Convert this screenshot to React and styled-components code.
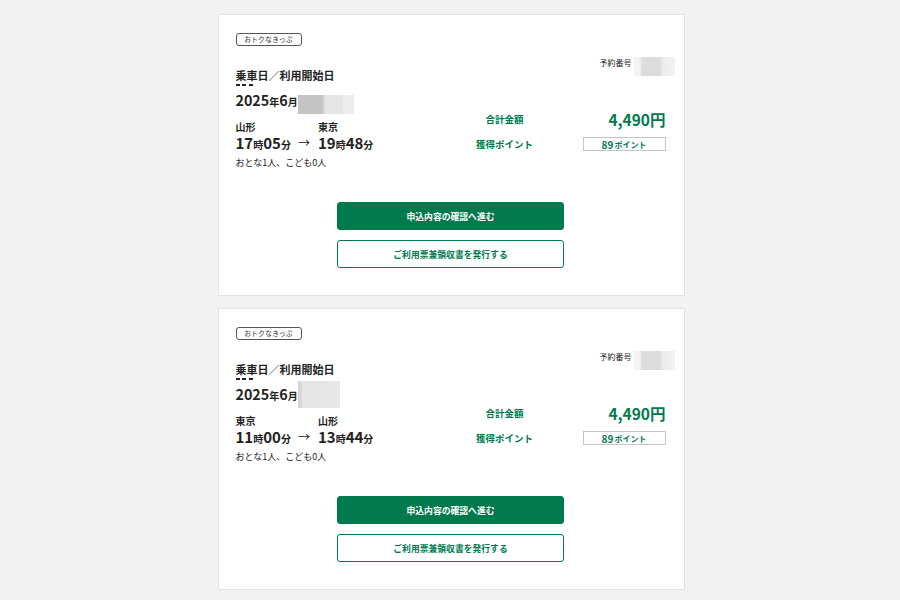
import React from 'react';
import styled, { createGlobalStyle } from 'styled-components';

const GREEN = '#007a4d';

const GlobalStyle = createGlobalStyle`
  body {
    margin: 0;
    background: #f2f2f2;
    font-family: "Noto Sans CJK JP", "Noto Sans", sans-serif;
    color: #222;
  }
`;

const trips = [
  {
    from: '山形', to: '東京',
    dep: ['17', '05'], arr: ['19', '48'],
    blur: { h: 19, kind: 'split' },
  },
  {
    from: '東京', to: '山形',
    dep: ['11', '00'], arr: ['13', '44'],
    blur: { h: 27, kind: 'plain' },
  },
];

function Trip({ trip }) {
  return (
    <Card>
      <Top>
        <LeftCol>
          <Tag>おトクなきっぷ</Tag>
          <Title>乗車日／利用開始日</Title>
          <Dashes />
          <DateRow>
            <DateText>
              2025<Small>年</Small>6<Small>月</Small>
            </DateText>
            <Blur $w={trip.blur.kind === 'split' ? 56 : 42} $h={trip.blur.h} $kind={trip.blur.kind} />
          </DateRow>
          <Route>
            <Station>{trip.from}</Station>
            <span />
            <Station>{trip.to}</Station>
            <Time>{trip.dep[0]}<Unit>時</Unit>{trip.dep[1]}<Unit>分</Unit></Time>
            <Arrow>→</Arrow>
            <Time>{trip.arr[0]}<Unit>時</Unit>{trip.arr[1]}<Unit>分</Unit></Time>
          </Route>
          <Pax>おとな1人、こども0人</Pax>
        </LeftCol>
        <RightCol>
          <Reserve>
            <ReserveLabel>予約番号</ReserveLabel>
            <Blur $w={41} $h={19} $kind="center" />
          </Reserve>
          <PriceGrid>
            <PriceLabel>合計金額</PriceLabel>
            <Price>4,490円</Price>
            <PriceLabel>獲得ポイント</PriceLabel>
            <PointBox>89<PointUnit>ポイント</PointUnit></PointBox>
          </PriceGrid>
        </RightCol>
      </Top>
      <Buttons>
        <Button $primary>申込内容の確認へ進む</Button>
        <Button>ご利用票兼領収書を発行する</Button>
      </Buttons>
    </Card>
  );
}

export default function App() {
  return (
    <>
      <GlobalStyle />
      <Page>
        {trips.map((t, i) => <Trip key={i} trip={t} />)}
      </Page>
    </>
  );
}

const Page = styled.div`
  display: flex;
  flex-direction: column;
  align-items: center;
  gap: 12px;
  padding: 14px 0 12px 2px;
`;

const Card = styled.div`
  width: 430px;
  background: #fff;
  border: 1px solid #e3e3e3;
  padding: 18px 18px 27px 17px;
`;

const Top = styled.div`
  display: flex;
  align-items: flex-start;
`;

const LeftCol = styled.div`
  width: 210px;
  display: flex;
  flex-direction: column;
  align-items: flex-start;
`;

const Tag = styled.div`
  width: 64px;
  height: 11px;
  border: 1px solid #555;
  border-radius: 3px;
  font-size: 7px;
  line-height: 11px;
  text-align: center;
  color: #333;
`;

const Title = styled.div`
  margin-top: 22px;
  font-size: 11px;
  line-height: 14px;
  font-weight: 700;
`;

const Dashes = styled.div`
  margin-top: 2px;
  width: 17px;
  height: 2px;
  background: repeating-linear-gradient(90deg, #222 0 4px, transparent 4px 6.5px);
`;

const DateRow = styled.div`
  margin-top: 4px;
  height: 24px;
  display: flex;
  align-items: flex-end;
`;

const DateText = styled.div`
  font-size: 14.3px;
  line-height: 20px;
  font-weight: 700;
  padding-bottom: 4px;
`;

const Small = styled.span`
  font-size: 10px;
  line-height: 10px;
`;

const Blur = styled.div`
  flex: none;
  width: ${(p) => p.$w}px;
  height: ${(p) => p.$h}px;
  background: ${(p) =>
    p.$kind === 'split'
      ? 'linear-gradient(90deg, #c4c4c4 0 25px, #d9d9d9 25px 27px, #e5e5e5 27px 45px, #ececec 45px)'
      : p.$kind === 'center'
      ? 'linear-gradient(90deg, #f3f3f3 0 6px, #dcdcdc 8px 26px, #ebebeb 28px, #f3f3f3)'
      : 'linear-gradient(90deg, #d6d6d6 0 3px, #e4e4e4 4px, #e8e8e8)'};
`;

const Route = styled.div`
  margin-top: 5px;
  display: grid;
  grid-template-columns: auto auto auto;
  grid-template-rows: 15px 18px;
  column-gap: 7px;
  align-items: center;
`;

const Station = styled.div`
  font-size: 10px;
  line-height: 14px;
  font-weight: 700;
`;

const Time = styled.div`
  font-size: 15px;
  line-height: 18px;
  font-weight: 700;
`;

const Unit = styled.span`
  font-size: 10px;
  line-height: 10px;
`;

const Arrow = styled.div`
  font-size: 12px;
  line-height: 18px;
  padding-right: 1px;
`;

const Pax = styled.div`
  margin-top: 4px;
  font-size: 9px;
  line-height: 13px;
`;

const RightCol = styled.div`
  flex: 1;
  padding-top: 24px;
  display: flex;
  flex-direction: column;
`;

const Reserve = styled.div`
  display: flex;
  justify-content: flex-end;
  align-items: flex-start;
  gap: 2px;
  margin-right: -9px;
`;

const ReserveLabel = styled.div`
  font-size: 8px;
  line-height: 10px;
  margin-top: 1px;
`;

const PriceGrid = styled.div`
  margin-top: 32px;
  display: grid;
  grid-template-columns: 1fr 83px;
  grid-template-rows: 22px 14px;
  column-gap: 19px;
  row-gap: 7px;
  align-items: center;
`;

const PriceLabel = styled.div`
  text-align: center;
  font-size: 9.5px;
  font-weight: 700;
  color: ${GREEN};
`;

const Price = styled.div`
  text-align: right;
  font-size: 15.5px;
  line-height: 22px;
  font-weight: 700;
  color: ${GREEN};
`;

const PointBox = styled.div`
  height: 12px;
  border: 1px solid #c4c4c4;
  display: flex;
  justify-content: center;
  align-items: center;
  font-size: 10px;
  font-weight: 700;
  color: ${GREEN};
`;

const PointUnit = styled.span`
  font-size: 8px;
  margin-left: 1px;
`;

const Buttons = styled.div`
  margin-top: 33px;
  display: flex;
  flex-direction: column;
  align-items: center;
  gap: 10px;
`;

const Button = styled.button`
  width: 227px;
  height: 28px;
  border-radius: 3px;
  border: ${(p) => (p.$primary ? `1px solid ${GREEN}` : `1.5px solid ${GREEN}`)};
  background: ${(p) => (p.$primary ? GREEN : '#fff')};
  color: ${(p) => (p.$primary ? '#fff' : GREEN)};
  font-family: inherit;
  font-size: 8.8px;
  font-weight: 700;
  cursor: pointer;
`;
